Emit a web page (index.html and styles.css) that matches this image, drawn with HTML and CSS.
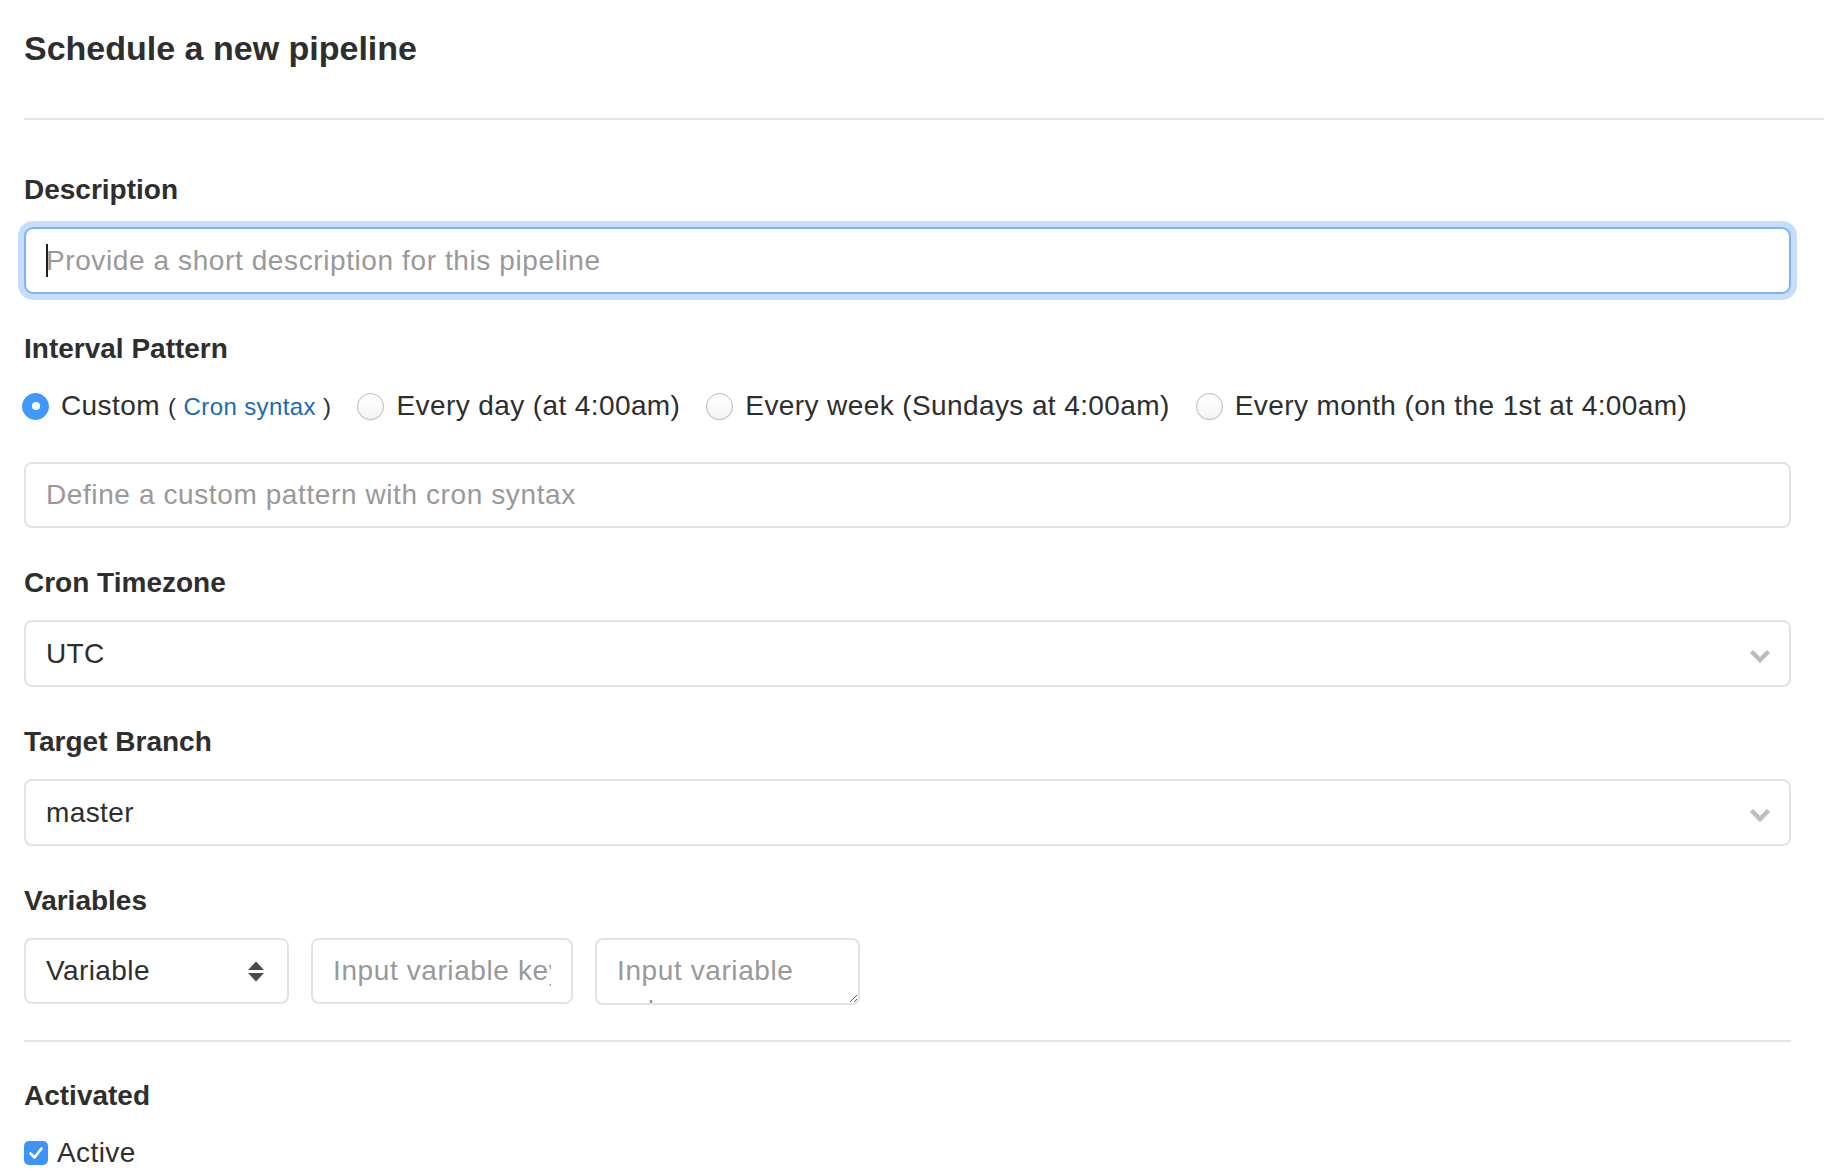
FILE: index.html
```html
<!DOCTYPE html>
<html lang="en">
<head>
<meta charset="utf-8">
<title>Schedule a new pipeline</title>
<link rel="stylesheet" href="styles.css">
</head>
<body>
<div class="page">
  <h3 class="page-title">Schedule a new pipeline</h3>
  <div class="title-rule"></div>
  <form class="schedule-form">
    <div class="form-group">
      <label class="label">Description</label>
      <div class="focus-wrap">
        <input class="form-control focused" type="text" placeholder="Provide a short description for this pipeline">
        <span class="caret"></span>
      </div>
    </div>

    <div class="form-group">
      <label class="label">Interval Pattern</label>
      <div class="radio-row">
        <label class="radio-option"><span class="radio checked"></span><span>Custom <span class="syntax">( <a href="#">Cron syntax</a> )</span></span></label>
        <label class="radio-option"><span class="radio"></span><span>Every day (at 4:00am)</span></label>
        <label class="radio-option"><span class="radio"></span><span>Every week (Sundays at 4:00am)</span></label>
        <label class="radio-option"><span class="radio"></span><span>Every month (on the 1st at 4:00am)</span></label>
      </div>
      <input class="form-control cron-input" type="text" placeholder="Define a custom pattern with cron syntax">
    </div>

    <div class="form-group">
      <label class="label">Cron Timezone</label>
      <div class="select">
        <span>UTC</span>
        <svg class="chevron" viewBox="0 0 22 14"><polyline points="2.5,2.5 11,11 19.5,2.5"/></svg>
      </div>
    </div>

    <div class="form-group">
      <label class="label">Target Branch</label>
      <div class="select">
        <span>master</span>
        <svg class="chevron" viewBox="0 0 22 14"><polyline points="2.5,2.5 11,11 19.5,2.5"/></svg>
      </div>
    </div>

    <div class="form-group">
      <label class="label">Variables</label>
      <div class="var-row">
        <div class="select var-select">
          <span>Variable</span>
          <svg class="updown" viewBox="0 0 16 21"><polygon points="0,9 8,0.5 16,9"/><polygon points="0,12 8,20.5 16,12"/></svg>
        </div>
        <input class="form-control var-key" type="text" placeholder="Input variable key">
        <textarea class="form-control var-value" placeholder="Input variable value"></textarea>
      </div>
    </div>

    <div class="bottom-rule"></div>

    <div class="form-group activated">
      <label class="label">Activated</label>
      <label class="check-row">
        <span class="checkbox"><svg viewBox="0 0 24 24"><polyline points="6.5,12.5 10.5,16.5 17.5,7.5"/></svg></span>
        <span>Active</span>
      </label>
    </div>
  </form>
</div>
</body>
</html>
```

FILE: styles.css
```css
* { box-sizing: border-box; }

html, body {
  margin: 0;
  background: #fff;
}

body {
  font-family: "Liberation Sans", Arial, Helvetica, sans-serif;
  font-size: 28px;
  line-height: 40px;
  color: #2e2e2e;
  letter-spacing: 0.4px;
}

.page {
  padding: 28px 0 0 24px;
}

.page-title {
  margin: 0;
  font-size: 34px;
  line-height: 40px;
  font-weight: bold;
  letter-spacing: 0;
  color: #2e2e2e;
}

.title-rule {
  margin-top: 50px;
  border-top: 2px solid #e5e5e5;
}

.schedule-form {
  width: 1767px;
  padding-top: 50px;
}

.form-group + .form-group {
  margin-top: 35px;
}

.label {
  display: block;
  font-weight: bold;
  letter-spacing: 0;
  line-height: 40px;
  margin-bottom: 17px;
}

.form-control {
  display: block;
  width: 100%;
  height: 66px;
  margin: 0;
  border: 2px solid #e3e3e3;
  border-radius: 8px;
  padding: 0 20px;
  font-family: inherit;
  font-size: 28px;
  line-height: 40px;
  letter-spacing: 0.4px;
  color: #2e2e2e;
  background: #fff;
  outline: none;
}

.form-control::placeholder {
  color: #999;
  opacity: 1;
  letter-spacing: 0.6px;
}

.focus-wrap {
  position: relative;
}

.form-control.focused {
  height: 67px;
  border-color: #7db5f2;
  box-shadow: 0 0 0 6px #c6defb;
  border-radius: 9px;
}

.caret {
  position: absolute;
  left: 22px;
  top: 17px;
  width: 2px;
  height: 33px;
  background: #1e1e1e;
}

.radio-row {
  display: flex;
  align-items: center;
  height: 40px;
  margin-top: 3px;
  margin-left: -2px;
}

.radio-option {
  display: inline-flex;
  align-items: center;
  gap: 12px;
  margin-right: 26px;
  white-space: nowrap;
}

.radio {
  width: 27px;
  height: 27px;
  border-radius: 50%;
  border: 1.5px solid #b8b8b8;
  background: linear-gradient(#fff, #f4f4f4);
  box-shadow: 0 1px 1px rgba(0, 0, 0, 0.06);
  flex: none;
  display: flex;
  align-items: center;
  justify-content: center;
}

.radio.checked {
  border-color: #3a95f8;
  background: #3d99fc;
  box-shadow: none;
}

.radio.checked::after {
  content: "";
  width: 8px;
  height: 8px;
  border-radius: 50%;
  background: #fff;
}

.syntax {
  font-size: 24px;
}

.syntax a {
  color: #1b69b6;
  text-decoration: none;
}

.cron-input {
  margin-top: 36px;
}

.select {
  display: flex;
  align-items: center;
  justify-content: space-between;
  height: 67px;
  border: 2px solid #e3e3e3;
  border-radius: 8px;
  padding: 0 18px 0 20px;
  background: #fff;
}

.chevron {
  width: 22px;
  height: 14px;
  margin-top: 5px;
  fill: none;
  stroke: #bdbdbd;
  stroke-width: 4.5;
}

.var-row {
  display: flex;
  gap: 22px;
  align-items: flex-start;
}

.var-select {
  width: 265px;
  height: 66px;
  padding-right: 23px;
}

.updown {
  width: 16px;
  height: 21px;
  fill: #4a4a4a;
}

.var-key {
  width: 262px;
}

.var-value {
  width: 265px;
  height: 67px;
  padding: 11px 20px;
  resize: both;
  overflow: hidden;
}

.bottom-rule {
  margin-top: 35px;
  border-top: 2px solid #e5e5e5;
}

.form-group.activated {
  margin-top: 34px;
}

.check-row {
  display: flex;
  align-items: center;
  gap: 9px;
  height: 40px;
  margin-top: 3px;
}

.checkbox {
  width: 24px;
  height: 24px;
  border-radius: 5px;
  background: #3d94f6;
  flex: none;
  display: flex;
}

.checkbox svg {
  width: 24px;
  height: 24px;
  fill: none;
  stroke: #fff;
  stroke-width: 2.6;
  stroke-linecap: round;
  stroke-linejoin: round;
}
```
